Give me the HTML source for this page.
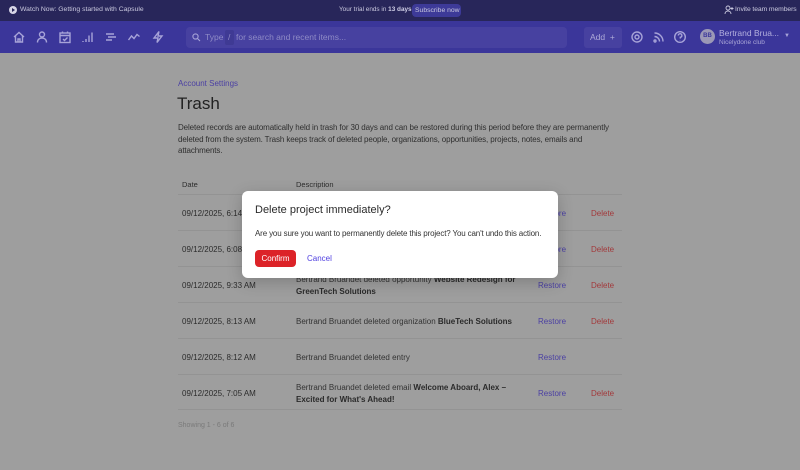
<!DOCTYPE html>
<html><head><meta charset="utf-8"><style>
*{box-sizing:border-box;margin:0;padding:0}
body{width:800px;height:470px;overflow:hidden;background:#9e9e9e;font-family:"Liberation Sans",sans-serif;position:relative;color:#2b2b2b}
.top{position:absolute;left:0;top:0;width:800px;height:21px;background:#28265a;color:#c9c8de;font-size:6.8px}
.nav{position:absolute;left:0;top:21px;width:800px;height:32px;background:#3b369a}
.abs{position:absolute}
.ic{position:absolute;top:30px;width:14px;height:14px}
.ic svg{width:14px;height:14px;stroke:#a7a3d8;fill:none;stroke-width:1.4}
.t{position:absolute;white-space:nowrap}
.row{position:absolute;left:178px;width:444px;border-top:1px solid #939393;height:36px}
.d{position:absolute;left:4px;font-size:8px;color:#2c2c2c}
.desc{position:absolute;left:118px;font-size:8px;color:#333;line-height:11.5px;width:225px}
.r{position:absolute;left:360px;font-size:8px;color:#4b40a3}
.x{position:absolute;left:413px;font-size:8px;color:#a2393b}
b{font-weight:bold;color:#2a2a2a}
</style></head><body>
<div class="top">
 <div class="abs" style="left:9px;top:6px;width:8px;height:8px;border-radius:50%;background:#d6d5e6"></div>
 <div class="abs" style="left:12px;top:8px;width:0;height:0;border-left:3px solid #28265a;border-top:2px solid transparent;border-bottom:2px solid transparent"></div>
 <div class="t" style="left:20px;top:6px">Watch Now: Getting started with Capsule</div>
 <div class="t" style="left:339px;top:6px;font-size:6.4px">Your trial ends in <b style="color:#d0cfe6">13 days</b></div>
 <div class="t" style="left:412px;top:4px;width:49px;height:13px;background:#3d3a98;border-radius:4px;padding:3px 0 0 3px">Subscribe now</div>
 <div class="t" style="left:735px;top:6px;letter-spacing:-0.1px">Invite team members</div>
 <svg class="abs" style="left:724px;top:5px" width="10" height="10" viewBox="0 0 10 10" fill="none" stroke="#c9c8de" stroke-width="0.9"><circle cx="4" cy="3" r="2"/><path d="M1 9c0-2 1.5-3 3-3s3 1 3 3M8 2v3M6.5 3.5h3"/></svg>
</div>
<div class="nav">
 <div class="abs" style="left:186px;top:6px;width:381px;height:21px;background:#4741a0;border-radius:4px"></div>
 <svg class="abs" style="left:192px;top:12px" width="9" height="9" viewBox="0 0 9 9" fill="none" stroke="#a7a3d8" stroke-width="1.1"><circle cx="3.5" cy="3.5" r="2.6"/><path d="M5.5 5.5L8 8"/></svg>
 <div class="t" style="left:205px;top:11px;font-size:8.5px;color:#8f8bc6">Type</div>
 <div class="abs" style="left:225px;top:9px;width:9px;height:15px;background:#3f3a94;border-radius:2px"></div>
 <div class="t" style="left:228px;top:11px;font-size:8.5px;color:#8f8bc6">/</div>
 <div class="t" style="left:236px;top:11px;font-size:8.5px;color:#8f8bc6">for search and recent items...</div>
 <div class="abs" style="left:584px;top:6px;width:38px;height:21px;background:#4741a0;border-radius:3px"></div>
 <div class="t" style="left:590px;top:11px;font-size:8.5px;color:#aeaad8">Add &nbsp;+</div>
 <div class="abs" style="left:700px;top:8px;width:15px;height:15px;border-radius:50%;background:#9b98b6;font-size:6px;color:#3b369a;text-align:center;line-height:15px;font-weight:bold">BB</div>
 <div class="t" style="left:719px;top:7px;font-size:8.5px;color:#b4b0de">Bertrand Brua...</div>
 <div class="t" style="left:719px;top:18px;font-size:6.5px;color:#a8a4d6">Nicelydone club</div>
 <div class="t" style="left:784px;top:12px;font-size:6px;color:#a7a3d8">▼</div>
</div>
<div class="ic" style="left:12px"><svg viewBox="0 0 14 14"><path d="M2 7L7 2.5 12 7M3.5 6v6h7V6M6 12V9h2v3"/></svg></div>
<div class="ic" style="left:35px"><svg viewBox="0 0 14 14"><circle cx="7" cy="4.5" r="2.5"/><path d="M2.5 12.5c0-3 2-4.5 4.5-4.5s4.5 1.5 4.5 4.5"/></svg></div>
<div class="ic" style="left:58px"><svg viewBox="0 0 14 14"><rect x="2" y="3" width="10" height="9.5"/><path d="M2 5.5h10M4.5 1.5v2M9.5 1.5v2M5 9l1.5 1.5 3-3"/></svg></div>
<div class="ic" style="left:81px"><svg viewBox="0 0 14 14"><path d="M2 12v-1M5 12V9M8 12V5.5M11 12V2.5"/></svg></div>
<div class="ic" style="left:104px"><svg viewBox="0 0 14 14"><path d="M2 4h8M4 7h8M2 10h6"/></svg></div>
<div class="ic" style="left:127px"><svg viewBox="0 0 14 14"><path d="M1.5 10l3-4 2.5 2.5 3-4 2.5 2"/></svg></div>
<div class="ic" style="left:151px"><svg viewBox="0 0 14 14"><path d="M8 1.5L3 8h4l-1 4.5L11 6H7z"/></svg></div>
<div class="ic" style="left:630px"><svg viewBox="0 0 14 14"><circle cx="7" cy="7" r="5"/><circle cx="7" cy="7" r="2"/></svg></div>
<div class="ic" style="left:652px"><svg viewBox="0 0 14 14"><path d="M2.5 3a8.5 8.5 0 0 1 8.5 8.5M2.5 6.5a5 5 0 0 1 5 5"/><circle cx="3" cy="11" r="1"/></svg></div>
<div class="ic" style="left:673px"><svg viewBox="0 0 14 14"><circle cx="7" cy="7" r="5.3"/><path d="M5.3 5.5a1.8 1.8 0 1 1 2 1.8v1.2M7 10.2v.3"/></svg></div>

<div class="t" style="left:178px;top:79px;font-size:8px;color:#4b40a3">Account Settings</div>
<div class="t" style="left:177px;top:94px;font-size:17px;color:#222">Trash</div>
<div class="abs" style="left:178px;top:122px;width:450px;font-size:8px;line-height:11.5px;color:#2f2f2f;letter-spacing:-0.12px">Deleted records are automatically held in trash for 30 days and can be restored during this period before they are permanently deleted from the system. Trash keeps track of deleted people, organizations, opportunities, projects, notes, emails and attachments.</div>
<div class="t" style="left:182px;top:180px;font-size:7.5px;color:#2c2c2c">Date</div>
<div class="t" style="left:296px;top:180px;font-size:7.5px;color:#2c2c2c">Description</div>
<div class="row" style="top:194px"><div class="d" style="top:14px">09/12/2025, 6:14 AM</div><div class="r" style="top:14px">Restore</div><div class="x" style="top:14px">Delete</div></div>
<div class="row" style="top:230px"><div class="d" style="top:14px">09/12/2025, 6:08 AM</div><div class="r" style="top:14px">Restore</div><div class="x" style="top:14px">Delete</div></div>
<div class="row" style="top:266px"><div class="d" style="top:14px">09/12/2025, 9:33 AM</div><div class="desc" style="top:7px">Bertrand Bruandet deleted opportunity <b>Website Redesign for GreenTech Solutions</b></div><div class="r" style="top:14px">Restore</div><div class="x" style="top:14px">Delete</div></div>
<div class="row" style="top:302px"><div class="d" style="top:14px">09/12/2025, 8:13 AM</div><div class="desc" style="top:13px;width:300px">Bertrand Bruandet deleted organization <b>BlueTech Solutions</b></div><div class="r" style="top:14px">Restore</div><div class="x" style="top:14px">Delete</div></div>
<div class="row" style="top:338px"><div class="d" style="top:14px">09/12/2025, 8:12 AM</div><div class="desc" style="top:13px">Bertrand Bruandet deleted entry</div><div class="r" style="top:14px">Restore</div></div>
<div class="row" style="top:374px;border-bottom:1px solid #939393"><div class="d" style="top:14px">09/12/2025, 7:05 AM</div><div class="desc" style="top:7px">Bertrand Bruandet deleted email <b>Welcome Aboard, Alex – Excited for What's Ahead!</b></div><div class="r" style="top:14px">Restore</div><div class="x" style="top:14px">Delete</div></div>
<div class="t" style="left:178px;top:422px;font-size:7px;color:#7a7a7a">Showing 1 - 6 of 6</div>

<div class="abs" style="left:242px;top:191px;width:316px;height:87px;background:#fff;border-radius:6px;box-shadow:0 4px 16px rgba(0,0,0,.2)">
 <div class="t" style="left:13px;top:13px;font-size:11px;color:#2a2a2a">Delete project immediately?</div>
 <div class="t" style="left:13px;top:38px;font-size:8px;color:#333;letter-spacing:-0.15px">Are you sure you want to permanently delete this project? You can't undo this action.</div>
 <div class="abs" style="left:13px;top:59px;width:41px;height:17px;background:#dc2328;border-radius:4px;color:#fff;font-size:8px;text-align:center;line-height:17px">Confirm</div>
 <div class="t" style="left:65px;top:63px;font-size:8px;color:#4f3fe0">Cancel</div>
</div>
</body></html>
